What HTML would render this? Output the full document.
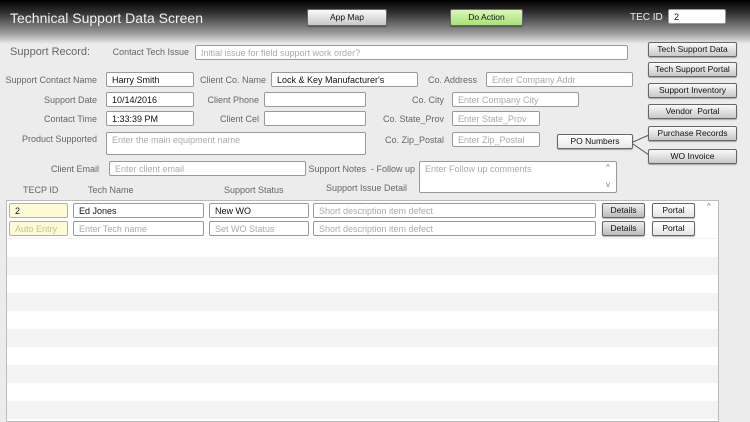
<!DOCTYPE html>
<html><head><style>
*{box-sizing:border-box;margin:0;padding:0}
body{width:750px;height:422px;overflow:hidden;background:#ececec;font-family:"Liberation Sans",sans-serif;font-size:9px;color:#555;position:relative}
.hdr{position:absolute;left:0;top:0;width:750px;height:44px;background:linear-gradient(#000 0%,#333 30%,#9a9a9a 75%,#ececec 100%)}
.a{position:absolute;white-space:nowrap}
.l{position:absolute;white-space:nowrap;text-align:right;color:#666}
.i{position:absolute;background:#fff;border:1px solid #999;border-radius:2px;height:15px;padding:1px 5px;color:#aaa;white-space:nowrap;overflow:hidden;line-height:12px}
.v{color:#111}
.b{position:absolute;height:15px;border:1px solid #666;border-radius:2px;background:linear-gradient(#fafafa,#c8c8c8);color:#111;text-align:center;line-height:13px;font-size:8.5px;box-shadow:0 1px 1px rgba(0,0,0,.3)}
.y{background:#fdfbd5;border-color:#b8b48a}
</style></head><body>
<div class="hdr"></div>
<div class="a" style="left:10px;top:10px;font-size:14px;color:#f2f2f2">Technical Support Data Screen</div>
<div class="b" style="left:307px;top:9px;width:80px;height:17px;line-height:15px">App Map</div>
<div class="b" style="left:450px;top:9px;width:73px;height:17px;line-height:15px;background:linear-gradient(#dbf7b8,#a9e07a)">Do Action</div>
<div class="a" style="left:630px;top:12px;color:#eee;font-size:10px">TEC ID</div>
<div class="i v" style="left:668px;top:9px;width:58px">2</div>

<div class="a" style="left:10px;top:46px;font-size:11px;color:#666">Support Record:</div>
<div class="l" style="left:100px;width:89px;top:47px">Contact Tech Issue</div>
<div class="i" style="left:195px;top:45px;width:433px">Initial issue for field support work order?</div>

<div class="l" style="left:0;width:97px;top:75px">Support Contact Name</div>
<div class="i v" style="left:106px;top:72px;width:88px">Harry Smith</div>
<div class="l" style="left:190px;width:76px;top:75px">Client Co. Name</div>
<div class="i v" style="left:271px;top:72px;width:147px">Lock &amp; Key Manufacturer's</div>
<div class="l" style="left:400px;width:77px;top:75px">Co. Address</div>
<div class="i" style="left:486px;top:72px;width:147px">Enter Company Addr</div>

<div class="l" style="left:0;width:97px;top:95px">Support Date</div>
<div class="i v" style="left:106px;top:92px;width:88px">10/14/2016</div>
<div class="l" style="left:190px;width:69px;top:95px">Client Phone</div>
<div class="i" style="left:264px;top:92px;width:102px"></div>
<div class="l" style="left:370px;width:74px;top:95px">Co. City</div>
<div class="i" style="left:452px;top:92px;width:127px">Enter Company City</div>

<div class="l" style="left:0;width:97px;top:114px">Contact Time</div>
<div class="i v" style="left:106px;top:111px;width:88px">1:33:39 PM</div>
<div class="l" style="left:190px;width:69px;top:114px">Client Cel</div>
<div class="i" style="left:264px;top:111px;width:102px"></div>
<div class="l" style="left:370px;width:74px;top:114px">Co. State_Prov</div>
<div class="i" style="left:452px;top:111px;width:88px">Enter State_Prov</div>

<div class="l" style="left:0;width:97px;top:134px">Product Supported</div>
<div class="i" style="left:106px;top:132px;width:260px;height:23px">Enter the main equipment name</div>
<div class="l" style="left:370px;width:74px;top:135px">Co. Zip_Postal</div>
<div class="i" style="left:452px;top:132px;width:88px">Enter Zip_Postal</div>

<div class="l" style="left:0;width:99px;top:164px">Client Email</div>
<div class="i" style="left:109px;top:161px;width:197px">Enter client email</div>
<div class="l" style="left:300px;width:115px;top:164px">Support Notes &nbsp;- Follow up</div>
<div class="i" style="left:419px;top:161px;width:198px;height:32px">Enter Follow up comments</div>
<div class="a" style="left:606px;top:163px;font-size:8px;color:#777">^</div>
<div class="a" style="left:606px;top:180px;font-size:8px;color:#777">v</div>

<div class="a" style="left:23px;top:185px;color:#666">TECP ID</div>
<div class="a" style="left:88px;top:185px;color:#666">Tech Name</div>
<div class="a" style="left:224px;top:185px;color:#666">Support Status</div>
<div class="a" style="left:326px;top:183px;color:#666">Support Issue Detail</div>

<svg class="a" style="left:630px;top:130px" width="20" height="30"><path d="M3 12 L19 5 M3 14 L19 25" stroke="#555" stroke-width="1"/></svg>
<div class="b" style="left:648px;top:42px;width:89px">Tech Support Data</div>
<div class="b" style="left:648px;top:62px;width:89px">Tech Support Portal</div>
<div class="b" style="left:648px;top:83px;width:89px">Support Inventory</div>
<div class="b" style="left:648px;top:104px;width:89px">Vendor &nbsp;Portal</div>
<div class="b" style="left:648px;top:126px;width:89px">Purchase Records</div>
<div class="b" style="left:648px;top:149px;width:89px">WO Invoice</div>
<div class="b" style="left:557px;top:134px;width:76px;background:linear-gradient(#fff,#e8e8e8)">PO Numbers</div>

<div class="a" style="left:6px;top:200px;width:713px;height:222px;border:1px solid #bbb;background:repeating-linear-gradient(#f3f3f3 0,#f3f3f3 2px,#fff 2px,#fff 20px,#f3f3f3 20px,#f3f3f3 36px)"></div>
<div class="a" style="left:7px;top:201px;width:711px;height:37px;background:#fff"></div>
<div class="a" style="left:707px;top:202px;font-size:8px;color:#777">^</div>

<div class="i v y" style="left:9px;top:203px;width:59px">2</div>
<div class="i v" style="left:73px;top:203px;width:131px">Ed Jones</div>
<div class="i v" style="left:209px;top:203px;width:100px">New WO</div>
<div class="i" style="left:313px;top:203px;width:283px">Short description item defect</div>
<div class="b" style="left:602px;top:203px;width:43px;background:linear-gradient(#eee,#bbb)">Details</div>
<div class="b" style="left:652px;top:203px;width:43px;background:linear-gradient(#fff,#e5e5e5)">Portal</div>

<div class="i y" style="left:9px;top:221px;width:59px;color:#c8c090">Auto Entry</div>
<div class="i" style="left:73px;top:221px;width:131px">Enter Tech name</div>
<div class="i" style="left:209px;top:221px;width:100px">Set WO Status</div>
<div class="i" style="left:313px;top:221px;width:283px">Short description item defect</div>
<div class="b" style="left:602px;top:221px;width:43px;background:linear-gradient(#eee,#bbb)">Details</div>
<div class="b" style="left:652px;top:221px;width:43px;background:linear-gradient(#fff,#e5e5e5)">Portal</div>
</body></html>
